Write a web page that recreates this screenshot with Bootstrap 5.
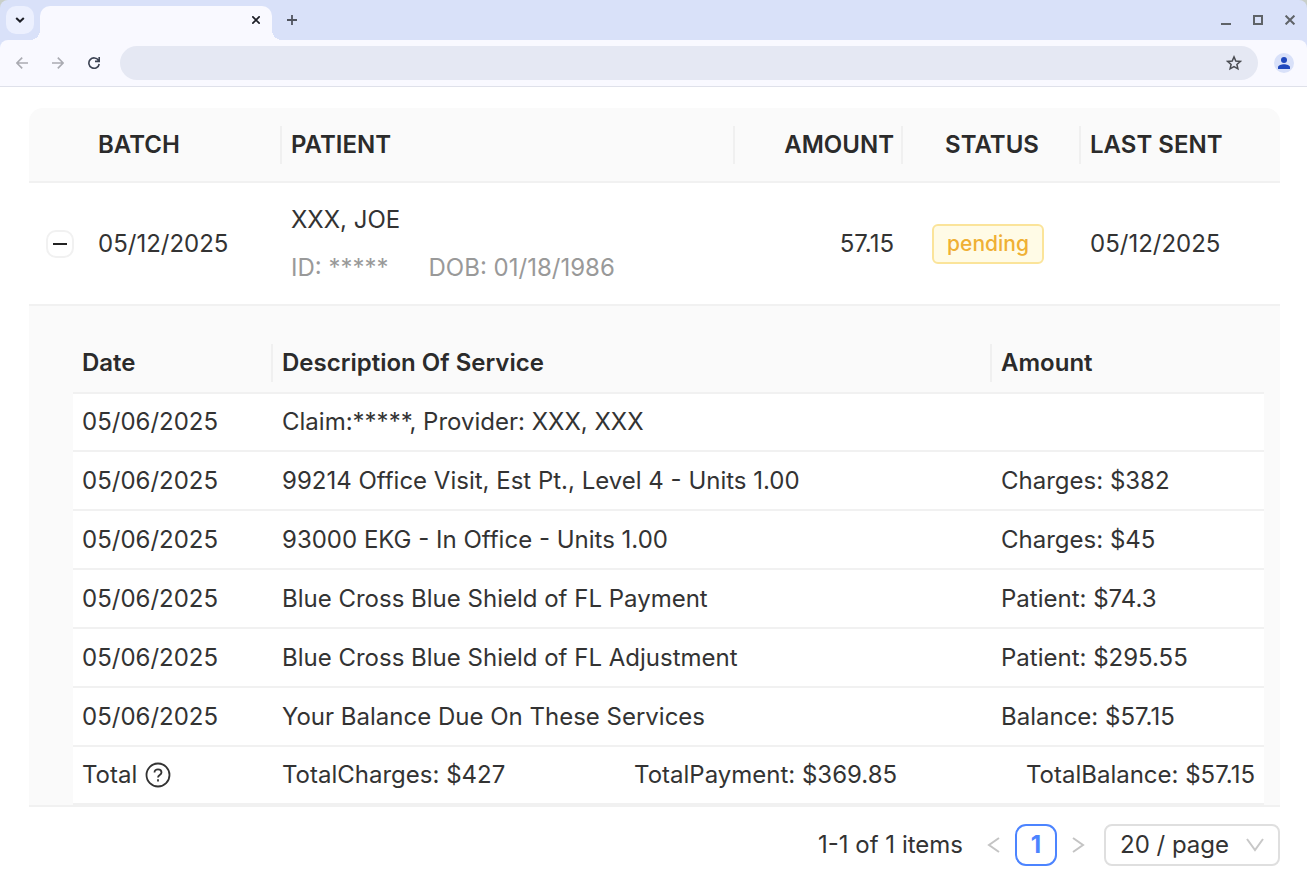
<!DOCTYPE html>
<html lang="en">
<head>
<meta charset="utf-8">
<meta name="viewport" content="width=device-width, initial-scale=1">
<title>Statements</title>
<link href="https://cdn.jsdelivr.net/npm/bootstrap@5.3.0/dist/css/bootstrap.min.css" rel="stylesheet">
<style>
body{font-family:Inter,"Liberation Sans",sans-serif;font-size:24px;line-height:36px;color:#333;background:#fff}
button{font:inherit;color:inherit}
svg{display:block}
/* browser window */
.strip-wrap{background:#c9cfc9}
.strip{height:40px;background:#d9e1f9;border-radius:8px 8px 0 0;padding:6px 9px 0 6px}
.menu-btn{width:28px;height:28px;border-radius:10px;background:#ecf0fe}
.page-tab{width:232px;height:34px;margin-left:6px;background:#f9f9ff;border-radius:10px 10px 0 0;padding-right:8px;position:relative}
.page-tab::before,.page-tab::after{content:"";position:absolute;bottom:0;width:10px;height:10px}
.page-tab::before{left:-10px;background:radial-gradient(circle at 0 0,transparent 10px,#f9f9ff 10px)}
.page-tab::after{right:-10px;background:radial-gradient(circle at 100% 0,transparent 10px,#f9f9ff 10px)}
.icon-btn{width:16px;height:28px}
.new-tab{width:28px;margin-left:6px}
.win-btns{gap:16px}
.toolbar-wrap{background:#d9e1f9}
.toolbar{height:47px;background:#f9f9ff;border-radius:8px 8px 0 0;border-bottom:1px solid #dfe1ea;padding:0 13px 0 14px}
.toolbar .icon-btn{color:#3c4353}
.toolbar .icon-btn.dim{color:#aaabb2}
.nav-btns{gap:20px}
.address{height:34px;border-radius:17px;background:#e5e8f3;margin-left:18px;margin-right:16px;padding-right:16px}
.address input{background:transparent;outline:0;font-size:14px}
.avatar{width:20px;height:20px;background:#d9e1f9}
/* claims table */
.claims{padding:21px 27px 16px 29px}
.grid-table{width:100%;table-layout:fixed;border-collapse:separate;border-spacing:0}
.grid-table th,.grid-table td{padding:0 9px;border-bottom:2px solid #f1f1f1;white-space:nowrap}
.grid-table th{font-weight:600;color:#2b2b2b;background:#fafafa}
.grid-table th.split{background:linear-gradient(#f0f0f0,#f0f0f0) right center/2px 38px no-repeat #fafafa}
.outer-head th{height:75px}
.outer-head th:first-child{border-top-left-radius:14px}
.outer-head th:last-child{border-top-right-radius:14px}
.claim-row td{height:123px}
.c-exp{width:60px}.c-batch{width:193px}.c-amt{width:168px}.c-status{width:178px}.c-sent{width:199px}
.c-date{width:200px}.c-sum{width:272px}
.expander{width:28px;height:28px;border:2px solid #f1f1f1;border-radius:10px;background:#fff;color:#222}
.patient-name{margin-bottom:12px}
.ids{color:#999;gap:40px}
.tag-pending{font-size:21px;font-weight:500;line-height:36px;height:40px;border:2px solid #fbe49a;border-radius:6px;background:#fffbe6;color:#efb034;padding:0 13px}
.grid-table td.detail-cell{background:#fafafa;padding:28px 16px 0 44px}
.detail th{height:60px}
.detail td{height:59px;background:#fff}
.detail tbody tr:first-child td,.detail tfoot td{height:58px}
.help{color:#333}
/* pager */
.pager{margin-top:17px}
.pager .step{color:#c4c4c4;width:14px}
.pager .current{width:42px;height:42px;border:2px solid #4c84ff;border-radius:11px;background:#fff;color:#4c84ff;font-weight:700;margin:0 14px}
.pager .size{width:176px;height:42px;margin-left:19px;padding:0 36px 0 14px;border:2px solid #dfdfdf;border-radius:8px;font-size:24px;line-height:36px;color:#333;background-position:right 13px center;background-size:20px 16px;background-image:url("data:image/svg+xml,%3csvg xmlns='http://www.w3.org/2000/svg' viewBox='0 0 20 16'%3e%3cpath d='M2 2l8 11 8-11' fill='none' stroke='%23c8c8c8' stroke-width='2'/%3e%3c/svg%3e")}
</style>
</head>
<body>
<header>
  <div class="strip-wrap">
    <div class="strip d-flex">
      <button class="menu-btn btn border-0 p-0 d-flex align-items-center justify-content-center" aria-label="Search tabs">
        <svg width="10" height="8" viewBox="0 0 10 8" fill="none" stroke="#1d1f27" stroke-width="2"><path d="M1.2 2 5 5.6 8.800 2"/></svg>
      </button>
      <div class="page-tab d-flex justify-content-end">
        <button class="icon-btn btn border-0 p-0 d-flex align-items-center justify-content-center" aria-label="Close tab">
          <svg width="8" height="8" viewBox="0 0 8 8" stroke="#1d1f27" stroke-width="1.700"><path d="M.3.3l7.400 7.400M7.700.3.300 7.700"/></svg>
        </button>
      </div>
      <button class="icon-btn new-tab btn border-0 p-0 d-flex align-items-center justify-content-center" aria-label="New tab">
        <svg width="10" height="10" viewBox="0 0 10 10" stroke="#50545f" stroke-width="1.800"><path d="M5 0v10M0 5h10"/></svg>
      </button>
      <div class="win-btns d-flex ms-auto">
        <button class="icon-btn btn border-0 p-0 d-flex align-items-center justify-content-center" aria-label="Minimise"><svg width="10" height="10" viewBox="0 0 10 10" stroke="#5f6368" stroke-width="2"><path d="M0 9h10"/></svg></button>
        <button class="icon-btn btn border-0 p-0 d-flex align-items-center justify-content-center" aria-label="Maximise"><svg width="10" height="10" viewBox="0 0 10 10" fill="none" stroke="#5f6368" stroke-width="2"><path d="M1 1h8v8H1z"/></svg></button>
        <button class="icon-btn btn border-0 p-0 d-flex align-items-center justify-content-center" aria-label="Close window"><svg width="10" height="10" viewBox="0 0 10 10" stroke="#5f6368" stroke-width="2"><path d="M.6.6l8.800 8.800M9.400.6.600 9.400"/></svg></button>
      </div>
    </div>
  </div>
  <div class="toolbar-wrap">
    <div class="toolbar d-flex align-items-center">
      <div class="nav-btns d-flex">
        <button class="icon-btn dim btn border-0 p-0 d-flex align-items-center justify-content-center" aria-label="Back"><svg width="12" height="12" viewBox="0 0 12 12" fill="none" stroke="currentColor" stroke-width="1.600"><path d="M12 6H1M6.200.6.900 6l5.300 5.400"/></svg></button>
        <button class="icon-btn dim btn border-0 p-0 d-flex align-items-center justify-content-center" aria-label="Forward"><svg width="12" height="12" viewBox="0 0 12 12" fill="none" stroke="currentColor" stroke-width="1.600"><path d="M0 6h11M5.800.6 11.100 6l-5.300 5.400"/></svg></button>
        <button class="icon-btn btn border-0 p-0 d-flex align-items-center justify-content-center" aria-label="Reload"><svg width="12" height="12" viewBox="0 0 12 12" fill="none" stroke="currentColor" stroke-width="1.600"><path d="M10.500 3.400A5.200 5.200 0 1 0 11.200 7M11.200 0v4.400H7"/></svg></button>
      </div>
      <div class="address d-flex align-items-center flex-grow-1">
        <input class="form-control border-0 shadow-none" type="text" aria-label="Address">
        <button class="icon-btn btn border-0 p-0 d-flex align-items-center justify-content-center" aria-label="Bookmark"><svg width="16" height="16" viewBox="0 0 16 16" fill="none" stroke="#4a4c52" stroke-width="1.500"><path d="M8 1.900 9.800 6l4.500.4-3.400 3 1 4.400L8 11.500l-3.900 2.300 1-4.400-3.400-3L6.200 6z"/></svg></button>
      </div>
      <button class="avatar btn border-0 p-0 rounded-circle d-flex align-items-center justify-content-center" aria-label="Profile"><svg width="12" height="12" viewBox="0 0 12 12" fill="#1f47bd"><circle cx="6" cy="3" r="3"/><path d="M0 12V10.300C0 8.300 3.500 7.300 6 7.300s6 1 6 3V12z"/></svg></button>
    </div>
  </div>
</header>
<main class="claims">
  <table class="grid-table">
    <colgroup><col class="c-exp"><col class="c-batch"><col><col class="c-amt"><col class="c-status"><col class="c-sent"></colgroup>
    <thead class="outer-head">
      <tr><th></th><th class="split">BATCH</th><th class="split">PATIENT</th><th class="split text-end">AMOUNT</th><th class="split text-center">STATUS</th><th>LAST SENT</th></tr>
    </thead>
    <tbody>
      <tr class="claim-row">
        <td><button class="expander p-0 ms-2 d-flex align-items-center justify-content-center" aria-label="Collapse row"><svg width="14" height="2" viewBox="0 0 14 2" fill="currentColor"><path d="M0 0h14v2H0z"/></svg></button></td>
        <td>05/12/2025</td>
        <td><div class="patient-name">XXX, JOE</div><div class="ids d-flex"><span>ID: *****</span><span>DOB: 01/18/1986</span></div></td>
        <td class="text-end">57.15</td>
        <td class="text-center"><span class="tag-pending d-inline-block align-middle me-2">pending</span></td>
        <td>05/12/2025</td>
      </tr>
      <tr>
        <td colspan="6" class="detail-cell">
          <table class="grid-table detail">
            <colgroup><col class="c-date"><col><col class="c-sum"></colgroup>
            <thead><tr><th class="split">Date</th><th class="split">Description Of Service</th><th>Amount</th></tr></thead>
            <tbody>
              <tr><td>05/06/2025</td><td>Claim:*****, Provider: XXX, XXX</td><td></td></tr>
              <tr><td>05/06/2025</td><td>99214 Office Visit, Est Pt., Level 4 - Units 1.00</td><td>Charges: $382</td></tr>
              <tr><td>05/06/2025</td><td>93000 EKG - In Office - Units 1.00</td><td>Charges: $45</td></tr>
              <tr><td>05/06/2025</td><td>Blue Cross Blue Shield of FL Payment</td><td>Patient: $74.3</td></tr>
              <tr><td>05/06/2025</td><td>Blue Cross Blue Shield of FL Adjustment</td><td>Patient: $295.55</td></tr>
              <tr><td>05/06/2025</td><td>Your Balance Due On These Services</td><td>Balance: $57.15</td></tr>
            </tbody>
            <tfoot>
              <tr>
                <td><div class="d-flex align-items-center gap-2">Total <svg class="help" width="26" height="26" viewBox="0 0 26 26" fill="none" stroke="currentColor" stroke-width="1.800"><circle cx="13" cy="13" r="11.500"/><path d="M9.500 10.600c0-2 1.500-3.300 3.500-3.300s3.500 1.300 3.500 3.100c0 2.600-3.500 2.500-3.500 5.100"/><path d="M13 17.300v2.300"/></svg></div></td>
                <td colspan="2"><div class="d-flex justify-content-between"><span>TotalCharges: $427</span><span>TotalPayment: $369.85</span><span>TotalBalance: $57.15</span></div></td>
              </tr>
            </tfoot>
          </table>
        </td>
      </tr>
    </tbody>
  </table>
  <nav class="pager d-flex align-items-center justify-content-end" aria-label="Pages">
    <span class="me-4">1-1 of 1 items</span>
    <button class="step btn border-0 p-0" aria-label="Previous page"><svg width="14" height="18" viewBox="0 0 14 18" fill="none" stroke="#c4c4c4" stroke-width="2"><path d="M12 2 2 9l10 7"/></svg></button>
    <button class="current p-0" aria-current="page">1</button>
    <button class="step btn border-0 p-0" aria-label="Next page"><svg width="14" height="18" viewBox="0 0 14 18" fill="none" stroke="#c4c4c4" stroke-width="2"><path d="m2 2 10 7-10 7"/></svg></button>
    <select class="size form-select" aria-label="Page size"><option>20 / page</option><option>50 / page</option></select>
  </nav>
</main>
<script src="https://cdn.jsdelivr.net/npm/bootstrap@5.3.0/dist/js/bootstrap.bundle.min.js"></script>
</body>
</html>
